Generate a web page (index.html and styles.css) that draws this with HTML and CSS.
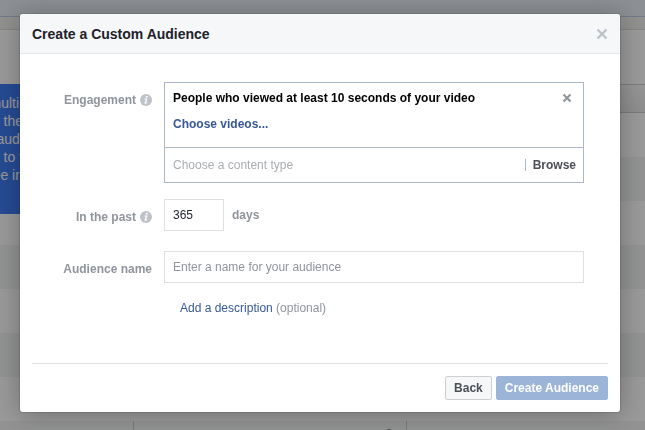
FILE: index.html
```html
<!DOCTYPE html>
<html lang="en">
<head>
  <meta charset="UTF-8">
  <meta name="viewport" content="width=device-width, initial-scale=1.0">
  <title>Create a Custom Audience</title>
  <link rel="stylesheet" href="styles.css">
</head>
<body>
  <div class="page">
    <div class="top-bar"></div>
    <div class="sub-bar"></div>
    <div class="list">
      <div class="list-head"></div>
      <div class="list-row"></div>
      <div class="list-row"></div>
      <div class="list-row"></div>
      <div class="list-row"></div>
      <div class="list-row"></div>
      <div class="list-row"></div>
      <div class="list-row"></div>
      <div class="list-row cells">
        <span></span>
        <span><i class="dot"></i></span>
        <span></span>
      </div>
    </div>
    <div class="tip">multi&nbsp;<br>the<br>audi<br>s to t<br>ee in</div>
  </div>

  <div class="overlay">
    <div class="dialog" role="dialog" aria-labelledby="dialogTitle">
      <div class="dialog-header">
        <h1 id="dialogTitle">Create a Custom Audience</h1>
        <button type="button" class="icon-button close" aria-label="Close">
          <svg width="12" height="12" viewBox="0 0 12 12"><path d="M1.500 1.500l9 9M10.500 1.500l-9 9"/></svg>
        </button>
      </div>

      <form class="dialog-body">
        <div class="row">
          <label class="row-label" for="contentType">Engagement
            <svg class="info" width="12" height="12" viewBox="0 0 12 12"><circle cx="6" cy="6" r="6"/><path d="M6 2h2l-.4 1.600H5.600zM4.600 4.600h2.700l-1 3.800h.9l-.2 1H4.200l.2-1h.6l.7-2.800h-1.300z"/></svg>
          </label>
          <div class="engagement">
            <div class="selected">
              <div class="selected-title">
                <span>People who viewed at least 10 seconds of your video</span>
                <button type="button" class="icon-button remove" aria-label="Remove">
                  <svg width="10" height="10" viewBox="0 0 10 10"><path d="M1.500 1.500l7 7M8.500 1.500l-7 7"/></svg>
                </button>
              </div>
              <a href="#" class="choose">Choose videos...</a>
            </div>
            <div class="picker">
              <input type="text" id="contentType" placeholder="Choose a content type">
              <button type="button" class="browse">Browse</button>
            </div>
          </div>
        </div>

        <div class="row">
          <label class="row-label" for="days">In the past
            <svg class="info" width="12" height="12" viewBox="0 0 12 12"><circle cx="6" cy="6" r="6"/><path d="M6 2h2l-.4 1.600H5.600zM4.600 4.600h2.700l-1 3.800h.9l-.2 1H4.200l.2-1h.6l.7-2.800h-1.300z"/></svg>
          </label>
          <input type="text" id="days" class="text-input days" value="365">
          <span class="unit">days</span>
        </div>

        <div class="row name-row">
          <label class="row-label" for="audienceName">Audience name</label>
          <input type="text" id="audienceName" class="text-input" placeholder="Enter a name for your audience">
        </div>

        <div class="description"><a href="#">Add a description</a> (optional)</div>
      </form>

      <div class="dialog-footer">
        <button type="button" class="button">Back</button>
        <button type="button" class="button primary">Create Audience</button>
      </div>
    </div>
  </div>
</body>
</html>
```
FILE: styles.css
```css
* {
  box-sizing: border-box;
}
body {
  margin: 0;
  font-family: "Liberation Sans", Arial, sans-serif;
  font-size: 12px;
  line-height: 16px;
  color: #1d2129;
}
button,
input {
  font: inherit;
}
a {
  color: #365899;
  text-decoration: none;
}

/* Page behind the dialog */
.page {
  position: relative;
  height: 100vh;
  overflow: hidden;
  background-color: #fff;
}
.top-bar {
  height: 17px;
  background-color: #e9eef6;
  border-bottom: 1px solid #bccbe6;
}
.sub-bar {
  height: 13px;
  background-color: #eff1ee;
  border-bottom: 1px solid #dcdddf;
}
.list {
  margin-top: 54px;
}
.list-head {
  height: 29px;
  background-image: linear-gradient(#f8f8f8, #eaeaea);
  border-top: 1px solid #ccc;
  border-bottom: 1px solid #ccc;
}
.list-row {
  height: 44px;
}
.list-row:nth-child(odd) {
  background-color: #f3f4f5;
}
.cells {
  display: grid;
  grid-template-columns: 134px 273px 1fr;
}
.cells span {
  display: flex;
  justify-content: flex-end;
  border-right: 1px solid #ccc;
}
.cells span:last-child {
  border-right: 0;
}
.dot {
  width: 6px;
  height: 6px;
  margin: 8px 14px 0 0;
  border-radius: 3px;
  background-color: #888;
}
.tip {
  position: absolute;
  top: 84px;
  left: -200px;
  width: 230px;
  height: 130px;
  padding: 10px 7px;
  background-color: #3f7df5;
  color: #fff;
  font-size: 14px;
  line-height: 18px;
  text-align: right;
}

/* Dialog */
.overlay {
  position: fixed;
  top: 0;
  right: 0;
  bottom: 0;
  left: 0;
  padding: 14px 25px 18px 20px;
  background-color: rgba(0, 0, 0, 0.4);
}
.dialog {
  background-color: #fff;
  border-radius: 3px;
  box-shadow: 0 2px 26px rgba(0, 0, 0, 0.3), 0 0 0 1px rgba(0, 0, 0, 0.1);
}
.dialog-header {
  display: flex;
  align-items: center;
  justify-content: space-between;
  height: 40px;
  padding: 0 12px;
  background-color: #f6f7f9;
  border-bottom: 1px solid #e5e5e5;
  border-radius: 3px 3px 0 0;
}
.dialog-header h1 {
  margin: 0;
  font-size: 14px;
  line-height: 20px;
}
.icon-button {
  display: flex;
  padding: 0;
  border: 0;
  background: none;
  cursor: pointer;
}
.icon-button path {
  fill: none;
  stroke: #bec2c9;
  stroke-width: 2.4;
}
.remove path {
  stroke: #90949c;
  stroke-width: 2;
}
.dialog-body {
  padding: 28px 36px 0 12px;
}
.row {
  display: flex;
  margin-bottom: 16px;
}
.row-label {
  display: flex;
  flex: none;
  align-items: center;
  justify-content: flex-end;
  gap: 4px;
  width: 120px;
  height: 36px;
  margin-right: 12px;
  color: #90949c;
  font-weight: bold;
}
.name-row {
  margin-bottom: 13px;
}
.info circle {
  fill: #bec3c9;
}
.info path {
  fill: #fff;
}
.engagement {
  flex: 1;
  border: 1px solid #aab8c9;
}
.selected {
  height: 65px;
  padding: 7px 8px;
  border-bottom: 1px solid #aab8c9;
}
.selected-title {
  display: flex;
  align-items: center;
  justify-content: space-between;
  margin-bottom: 10px;
  padding-right: 3px;
  color: #000;
  font-weight: bold;
}
.choose {
  font-weight: bold;
}
.picker {
  display: flex;
  align-items: center;
  height: 34px;
  padding: 0 7px 0 8px;
}
.picker input {
  flex: 1;
  min-width: 0;
  padding: 0;
  border: 0;
  outline: 0;
}
.picker input::placeholder {
  color: #aaadb3;
}
.browse {
  height: 12px;
  padding: 0 0 0 7px;
  border: 0;
  border-left: 1px solid #aab8c9;
  background: none;
  color: #4b4f56;
  font-weight: bold;
  line-height: 12px;
  cursor: pointer;
}
.text-input {
  flex: 1;
  height: 32px;
  padding: 0 8px;
  border: 1px solid #dddfe2;
  color: #1d2129;
}
.text-input::placeholder {
  color: #90949c;
}
.days {
  flex: none;
  width: 60px;
}
.unit {
  margin-left: 8px;
  color: #90949c;
  font-weight: bold;
  line-height: 32px;
}
.description {
  margin-left: 148px;
  color: #90949c;
}
.dialog-footer {
  display: flex;
  justify-content: flex-end;
  gap: 4px;
  margin: 47px 12px 0;
  padding: 12px 0;
  border-top: 1px solid #dddfe2;
}
.button {
  height: 24px;
  padding: 0 8px;
  border: 1px solid #ced0d4;
  border-radius: 2px;
  background-color: #f6f7f9;
  color: #4b4f56;
  font-weight: bold;
  cursor: pointer;
}
.primary {
  border-color: #9cb4d8;
  background-color: #9cb4d8;
  color: #fff;
}
```
